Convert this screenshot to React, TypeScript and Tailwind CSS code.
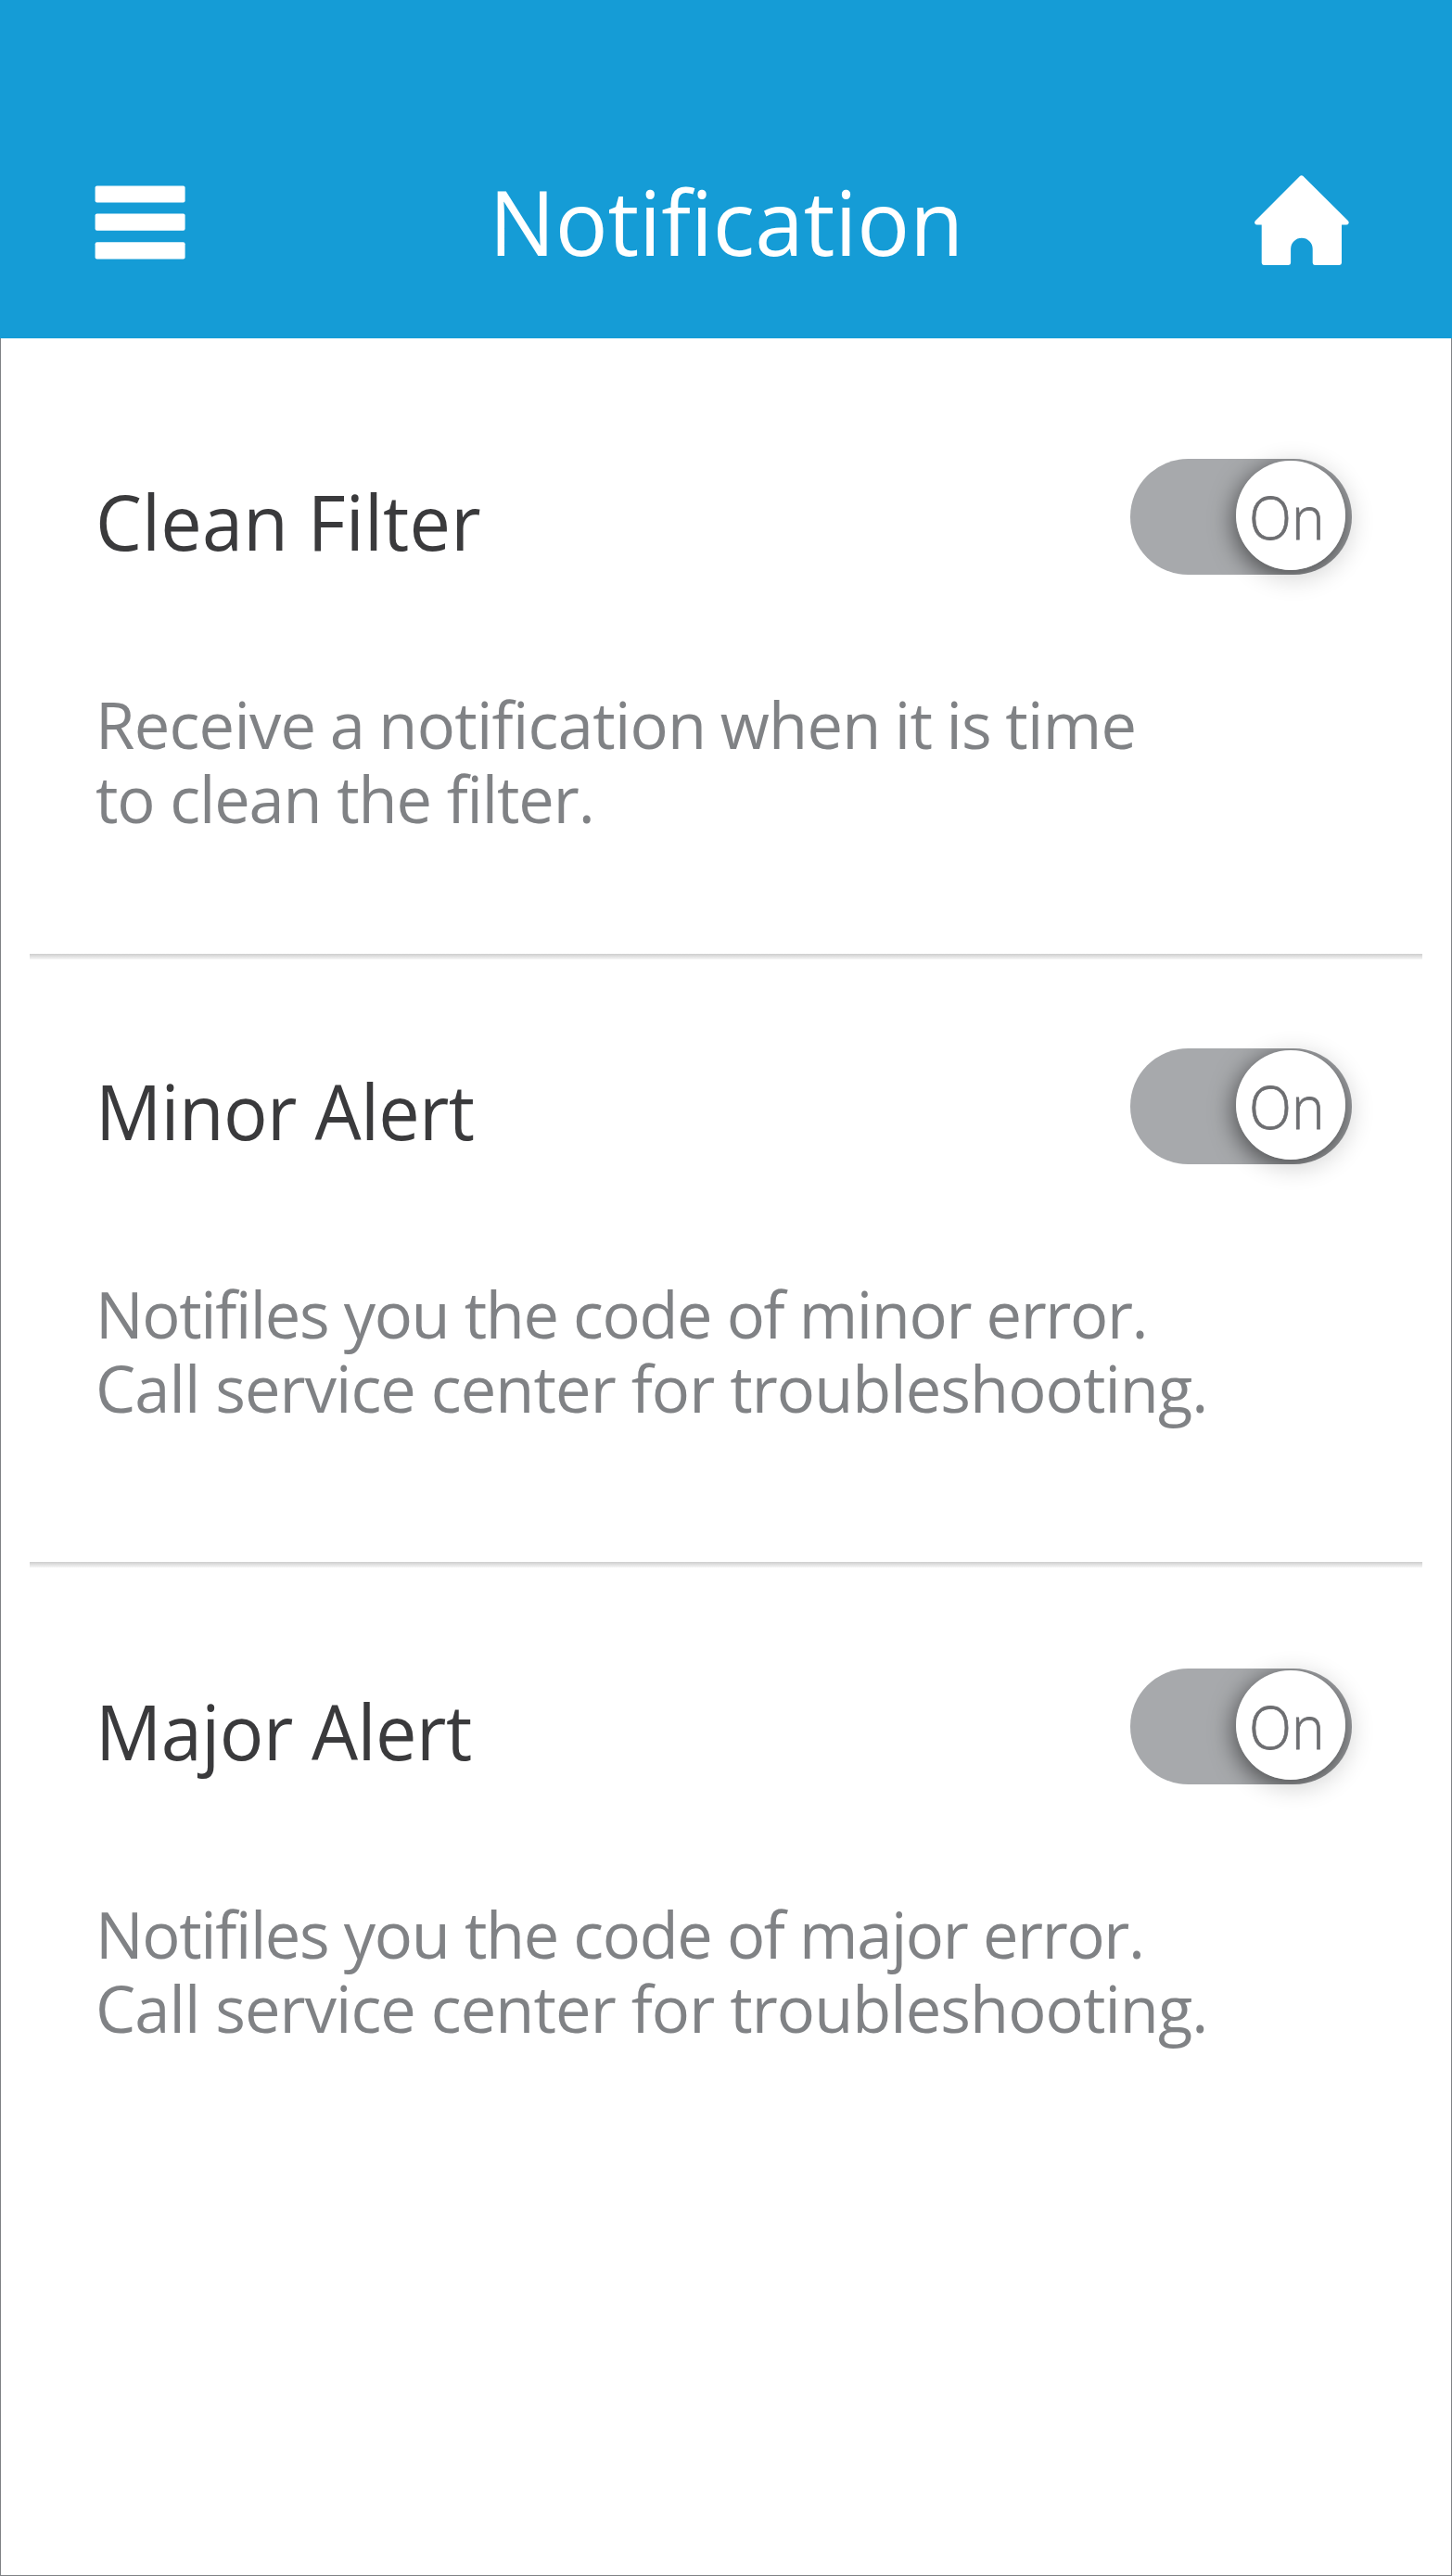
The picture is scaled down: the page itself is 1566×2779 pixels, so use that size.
function MenuIcon() {
  return (
    <svg width="100" height="82" viewBox="0 0 100 82" fill="#fff">
      <rect x="0.6" y="0.4" width="97" height="18.2" rx="2" />
      <rect x="0.6" y="30.6" width="97" height="18.2" rx="2" />
      <rect x="0.6" y="61.2" width="97" height="18.2" rx="2" />
    </svg>
  );
}

function HomeIcon() {
  return (
    <svg width="102" height="98" viewBox="0 0 102 98" fill="#fff">
      <path d="M49.2 .8Q50.7-.4 52.2.8L101 49.2Q102.3 51 101.2 52.6Q100.8 53.6 99 53.6H94V94.6Q94 97 91.6 97H65Q62.7 97 62.7 94.6V79.5A11.8 11.8 0 0 0 39.1 79.5V94.6Q39.1 97 36.8 97H10Q7.7 97 7.7 94.6V53.6H2.8Q1 53.6.6 52.6Q-.5 51 .8 49.2Z" />
    </svg>
  );
}

function Toggle() {
  return (
    <div className="relative h-[125px] w-[239px] shrink-0">
      <div className="absolute left-[114px] top-[2px] size-[118px] rounded-full shadow-[3px_6px_26px_4px_rgba(0,0,0,0.16)]" />
      <div className="absolute inset-0 overflow-hidden rounded-full bg-[#a7a9ac]">
        <div className="absolute left-[114px] top-[2px] size-[118px] rounded-full shadow-[0px_6px_26px_2px_rgba(0,0,0,0.55)]" />
      </div>
      <div className="absolute left-[114px] top-[2px] flex size-[118px] rounded-full bg-white pl-[14px]">
        <span className="origin-left scale-x-[0.92] text-[65.3px] font-light leading-[119px] text-[#6d6e71] [-webkit-text-stroke:0.8px_#6d6e71]">On</span>
      </div>
    </div>
  );
}

interface SettingProps {
  title: string;
  lines: [text: string, tracking: string][];
  className: string;
  spacing: string;
}

function Setting({ title, lines, className, spacing }: SettingProps) {
  return (
    <section className={`pl-[102px] pr-[107px] ${className}`}>
      <div className="flex justify-between">
        <h2 className={`origin-left scale-x-[0.96] whitespace-nowrap pt-[11px] text-[82.6px] leading-[112px] text-[#3a3a3c] ${spacing}`}>{title}</h2>
        <Toggle />
      </div>
      <div className="mt-[122px] text-[68.6px] leading-[80px] text-[#808285]">
        {lines.map(([text, tracking]) => (
          <p key={text} className={`whitespace-nowrap ${tracking}`}>{text}</p>
        ))}
      </div>
    </section>
  );
}

function Divider() {
  return <div className="mx-[31px] h-[6px] bg-linear-to-b from-[#cecece] to-[#f6f6f6]" />;
}

export default function App() {
  return (
    <div className="flex h-[2779px] w-[1566px] flex-col bg-white font-['Open_Sans',sans-serif]">
      <header className="flex h-[365px] items-start justify-between bg-[#159cd6] pl-[102px] pr-[111px] text-white">
        <div className="pt-[200px]"><MenuIcon /></div>
        <h1 className="ml-[12px] scale-x-[0.979] whitespace-nowrap pt-[174px] text-[96.6px] leading-[130px]">Notification</h1>
        <div className="pt-[189px]"><HomeIcon /></div>
      </header>
      <main className="flex-1 border-x border-b border-[#808285]">
        <Setting
          className="h-[664px] pt-[130px]"
          spacing="tracking-[0.16px]"
          title="Clean Filter"
          lines={[
            ['Receive a notification when it is time', 'tracking-[-0.7px] [word-spacing:-1.9px]'],
            ['to clean the filter.', 'tracking-[-1.11px]'],
          ]}
        />
        <Divider />
        <Setting
          className="h-[650px] pt-[96px]"
          spacing="tracking-[-0.72px]"
          title="Minor Alert"
          lines={[
            ['Notifiles you the code of minor error.', 'tracking-[-1.37px]'],
            ['Call service center for troubleshooting.', 'tracking-[-0.92px]'],
          ]}
        />
        <Divider />
        <Setting
          className="h-[640px] pt-[109px]"
          spacing="tracking-[-0.55px]"
          title="Major Alert"
          lines={[
            ['Notifiles you the code of major error.', 'tracking-[-1.36px]'],
            ['Call service center for troubleshooting.', 'tracking-[-0.92px]'],
          ]}
        />
      </main>
    </div>
  );
}
